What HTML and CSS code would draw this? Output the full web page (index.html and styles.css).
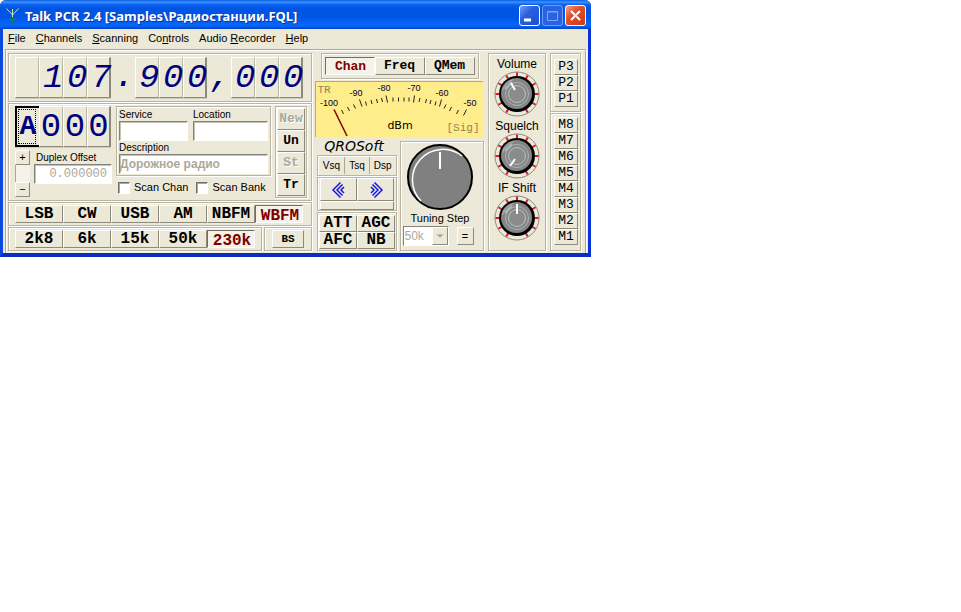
FILE: index.html
```html
<!DOCTYPE html>
<html lang="en">
<head>
<meta charset="utf-8">
<title>Talk PCR 2.4</title>
<link rel="stylesheet" href="styles.css">
</head>
<body>
<svg class="defs" aria-hidden="true">
  <symbol id="knob" viewBox="0 0 46 46">
    <circle cx="23" cy="23" r="22" fill="#ece9d8" stroke="#8c8a7c"/>
    <g stroke="#d81830" stroke-width="2">
      <path id="tick" d="M23 1.500V6"/>
      <use href="#tick" transform="rotate(30 23 23)"/>
      <use href="#tick" transform="rotate(60 23 23)"/>
      <use href="#tick" transform="rotate(90 23 23)"/>
      <use href="#tick" transform="rotate(120 23 23)"/>
      <use href="#tick" transform="rotate(150 23 23)"/>
      <use href="#tick" transform="rotate(210 23 23)"/>
      <use href="#tick" transform="rotate(240 23 23)"/>
      <use href="#tick" transform="rotate(270 23 23)"/>
      <use href="#tick" transform="rotate(300 23 23)"/>
      <use href="#tick" transform="rotate(330 23 23)"/>
    </g>
    <circle cx="23" cy="23" r="18" fill="#000"/>
    <circle cx="22.500" cy="22.500" r="15.500" fill="#858585"/>
    <path d="M8.500 20A14.500 14.500 0 0 1 20 8.500" fill="none" stroke="#a9b5b5"/>
    <path d="M11 18l7-7" stroke="#a9b4b4" stroke-width="3"/>
    <circle cx="23" cy="23" r="11.500" fill="none" stroke="#a9b5b5"/>
    <circle cx="23" cy="23" r="8.500" fill="#8b8b8b" stroke="#b8c4c4"/>
  </symbol>
</svg>
<main class="window">
  <header class="titlebar">
    <svg class="app-icon" viewBox="0 0 16 16" aria-hidden="true">
      <path d="M1.500 0.500l6 6.500 6-6.500M7.500 1v10" fill="none" stroke="#c8e6c0"/>
      <path d="M7.500 9v7M4 11.500h7" fill="none" stroke="#0a8060" stroke-width="2"/>
    </svg>
    <h1>Talk PCR 2.4 [Samples\Радиостанции.FQL]</h1>
    <button class="sys" aria-label="Minimize"><svg viewBox="0 0 19 19"><path d="M4 14h7" stroke="#fff" stroke-width="3"/></svg></button>
    <button class="sys dim" aria-label="Maximize" disabled><svg viewBox="0 0 19 19"><path d="M4.500 5.500h10v9h-10zM4 6h11" fill="none" stroke="#7ba4f2"/></svg></button>
    <button class="sys close" aria-label="Close"><svg viewBox="0 0 19 19"><path d="M5 5l9 9M14 5l-9 9" stroke="#fff" stroke-width="2"/></svg></button>
  </header>
  <nav class="menu">
    <a href="#"><u>F</u>ile</a><a href="#"><u>C</u>hannels</a><a href="#"><u>S</u>canning</a><a href="#">Co<u>n</u>trols</a><a href="#">Audio <u>R</u>ecorder</a><a href="#"><u>H</u>elp</a>
  </nav>
  <div class="panel">
    <section class="col">
      <div class="frame frequency">
        <span class="cell"></span><span class="cell">1</span><span class="cell">0</span><span class="cell edge">7</span><span class="mark">.</span><span class="cell">9</span><span class="cell">0</span><span class="cell edge">0</span><span class="mark">,</span><span class="cell">0</span><span class="cell">0</span><span class="cell edge">0</span>
      </div>
      <div class="frame channel">
        <div class="channel-left">
          <div class="channel-digits">
            <button class="cell bank">A</button><span class="cell">0</span><span class="cell">0</span><span class="cell edge">0</span>
          </div>
          <div class="duplex">
            <div class="stepper"><button class="btn">+</button><span></span><button class="btn">−</button></div>
            <div class="offset"><label for="offset">Duplex Offset</label><input id="offset" class="field" value="0.000000" disabled></div>
          </div>
        </div>
        <div class="details">
          <div class="frame detail-fields">
            <div class="entry service"><label for="service">Service</label><input id="service" class="field"></div>
            <div class="entry"><label for="location">Location</label><input id="location" class="field"></div>
            <div class="entry wide"><label for="description">Description</label><input id="description" class="field" value="Дорожное радио" disabled></div>
          </div>
          <div class="checks">
            <label><input type="checkbox">Scan Chan</label>
            <label><input type="checkbox">Scan Bank</label>
          </div>
        </div>
        <div class="frame actions">
          <button class="btn" disabled>New</button><button class="btn">Un</button><button class="btn" disabled>St</button><button class="btn">Tr</button>
        </div>
      </div>
      <div class="frame modes">
        <button class="btn">LSB</button><button class="btn">CW</button><button class="btn">USB</button><button class="btn">AM</button><button class="btn">NBFM</button><button class="btn on">WBFM</button>
      </div>
      <div class="filters">
        <div class="frame modes bandwidth">
          <button class="btn">2k8</button><button class="btn">6k</button><button class="btn">15k</button><button class="btn">50k</button><button class="btn on">230k</button>
        </div>
        <div class="frame scope"><button class="btn">BS</button></div>
      </div>
    </section>

    <section class="center">
      <div class="frame tabs"><button class="btn on">Chan</button><button class="btn">Freq</button><button class="btn">QMem</button></div>
      <svg class="meter" viewBox="0 0 168 56" role="img" aria-label="Signal meter">
        <path d="M0 0h168v56H0z" fill="#ffec8b"/>
        <path d="M.5 56V.5H168" fill="none" stroke="#b5ab78"/>
        <g class="scale">
          <text x="14" y="25">-100</text><text x="41" y="15">-90</text><text x="69" y="10">-80</text><text x="99" y="10">-70</text><text x="127" y="15">-60</text><text x="155" y="25">-50</text>
        </g>
        <path d="M44.500 18.500l2.500 7M71 14.500l1.500 7M99.500 14.500l-1 7M126.500 18.500l-2 7M151.500 28.500l-3 6M26.500 29l2 4M32.500 26l2 4M38.500 23.500l2 4M50.500 20.500l1 4M56 19l1 4M61.500 18l1 4M66.500 17l1 4M78 16.500v4M83.500 16.500v4M89 16.500v4M94 16.500v4M105 17l-1 4M111.500 18l-1 4M116 19l-1 4M121 20.500l-1 4M131 23.500l-2 4M136.500 26l-2 4M143.500 29l-2 4" stroke="#222" fill="none"/>
        <path d="M19 28.500l13 26.500" stroke="#800000" stroke-width="1.500"/>
        <text class="unit" x="85" y="48">dBm</text>
        <text class="flag" x="9" y="12">TR</text>
        <text class="flag" x="148" y="50">[Sig]</text>
      </svg>
      <div class="lower">
        <div class="switches">
          <div class="brand">QROSoft</div>
          <div class="frame squelch"><button>Vsq</button><button>Tsq</button><button>Dsp</button></div>
          <div class="frame seek">
            <button class="btn" aria-label="Seek down"><svg viewBox="0 0 16 16"><path d="M9.500 0.500L2 8l7.500 7.500M11.500 2.500L6 8l5.500 5.500M13 5l-3 3 3 3"/></svg></button>
            <button class="btn" aria-label="Seek up"><svg viewBox="0 0 16 16"><path d="M6.500 0.500L14 8l-7.500 7.500M4.500 2.500L10 8l-5.500 5.500M3 5l3 3-3 3"/></svg></button>
            <button class="btn bar" aria-label="Stop"></button>
          </div>
          <div class="frame gain"><button class="btn">ATT</button><button class="btn">AGC</button><button class="btn">AFC</button><button class="btn">NB</button></div>
        </div>
        <div class="frame tuning">
          <svg class="dial" viewBox="0 0 66 66" aria-hidden="true">
            <circle cx="33" cy="33" r="32" fill="#808080" stroke="#000" stroke-width="2"/>
            <path d="M14 57A30.500 30.500 0 0 1 55 12" fill="none" stroke="#fff" stroke-width="1.500"/>
            <path d="M33 8v17" stroke="#fff" stroke-width="2"/>
          </svg>
          <label for="step">Tuning Step</label>
          <div class="step">
            <span class="drop"><select id="step" disabled><option>50k</option></select><svg viewBox="0 0 16 16" aria-hidden="true"><path d="M4 6h8l-4 4z" fill="#aca899"/></svg></span>
            <button class="btn">=</button>
          </div>
        </div>
      </div>
    </section>

    <section class="frame knobs">
      <span>Volume</span>
      <svg viewBox="0 0 46 46" role="img" aria-label="Volume knob"><use href="#knob"/><path d="M17 12l4 7" stroke="#fff" stroke-width="2"/></svg>
      <span>Squelch</span>
      <svg viewBox="0 0 46 46" role="img" aria-label="Squelch knob"><use href="#knob"/><path d="M16 33l5-7" stroke="#fff" stroke-width="2"/></svg>
      <span>IF Shift</span>
      <svg viewBox="0 0 46 46" role="img" aria-label="IF shift knob"><use href="#knob"/><path d="M23 9v10" stroke="#fff" stroke-width="2"/></svg>
    </section>

    <section class="col">
      <div class="frame presets"><button class="btn">P3</button><button class="btn">P2</button><button class="btn">P1</button></div>
      <div class="frame presets memories"><button class="btn">M8</button><button class="btn">M7</button><button class="btn">M6</button><button class="btn">M5</button><button class="btn">M4</button><button class="btn">M3</button><button class="btn">M2</button><button class="btn">M1</button></div>
    </section>
  </div>
</main>
</body>
</html>
```
FILE: styles.css
```css
* { box-sizing: border-box; }

:root {
  --face: #ece9d8;
  --shade: #aca899;
  --dark: #716f64;
  --navy: #000080;
  --maroon: #800000;
  --sans: "Liberation Sans", Arial, sans-serif;
  --mono: "Liberation Mono", "Courier New", monospace;
}

body { margin: 0; background: #fff; font: 11px/13px var(--sans); color: #000; }
button, input, select { margin: 0; padding: 0; font: inherit; color: inherit; border-radius: 0; }
svg { display: block; }
.defs { position: absolute; width: 0; height: 0; }

.window {
  width: fit-content;
  background: var(--face);
  border: solid #0831d9;
  border-width: 0 3px 4px;
  border-color: #0c49e0 #0831d9 #0a2ec0 #0c49e0;
  border-radius: 6px 6px 0 0;
}

/* Title bar */
.titlebar {
  display: flex;
  align-items: center;
  gap: 2px;
  height: 29px;
  margin: 0 -3px;
  padding: 2px 5px 0 5px;
  border-radius: 6px 6px 0 0;
  background: linear-gradient(#0a5be0 0, #3a92ff 7%, #0a62f0 16%, #0054e3 30%, #0056e8 60%, #0566fb 85%, #0560f0 92%, #0040c0 100%);
}
.titlebar h1 {
  flex: 1;
  margin: 0 0 0 2px;
  font: bold 13px/16px "Noto Sans", sans-serif;
  color: #fff;
  text-shadow: 1px 1px 0 #0a3490;
  white-space: nowrap;
}
.app-icon { width: 16px; height: 16px; }
.sys {
  width: 21px;
  height: 21px;
  border: 1px solid #fff;
  border-radius: 3px;
  background: linear-gradient(135deg, #6f9bf5, #2a60e0 40%, #1c4fd0);
}
.sys.dim { border-color: #6f9cf0; background: #2a62e2; }
.sys.close { background: linear-gradient(135deg, #f0a088, #e0502c 40%, #c83c14); }

/* Menu */
.menu { display: flex; gap: 10px; height: 20px; padding: 3px 5px; }
.menu a { color: #000; text-decoration: none; }

/* Shared parts */
.panel {
  display: flex;
  gap: 4px;
  margin: 0 2px;
  padding: 3px 4px 2px 2px;
  border: 1px solid var(--shade);
  border-bottom: 0;
  box-shadow: inset 1px 1px 0 #fff, 1px 0 0 #fff;
}
.col { display: flex; flex-direction: column; gap: 1px; }
.frame { border: 1px solid #b9b5a5; box-shadow: inset 1px 1px 0 #fff, 1px 1px 0 #fff; }
.btn {
  display: grid;
  place-items: center;
  border: 1px solid;
  border-color: #fff #8d8a7c #8d8a7c #fff;
  background: var(--face);
  white-space: nowrap;
}
.btn:disabled { color: var(--shade); text-shadow: 1px 1px 0 #fff; }
.btn.on {
  padding: 2px 0 0 2px;
  border-color: var(--dark) #fff #fff var(--dark);
  background: #f4f2e9;
  color: var(--maroon);
}
.field {
  width: 100%;
  border: 1px solid;
  border-color: #85827a #fff #fff #85827a;
  background: #fff;
  box-shadow: inset 1px 1px 0 #c6c3b4;
}
.field:disabled { color: var(--shade); }

/* Frequency readout */
.cell, .mark {
  width: 24px;
  height: 41px;
  color: var(--navy);
  font: 34px/40px var(--mono);
  text-align: center;
}
.cell {
  border: 1px solid;
  border-color: #fff #b9b5a5 #8d8a7c #fff;
  background: var(--face);
  box-shadow: 0 1px 0 #d0cdbd;
}
.cell.edge { border-right: 2px solid #8d8a7c; }
.frequency { display: flex; padding: 3px 8px 3px 6px; }
.frequency .cell, .frequency .mark { padding-left: 3px; font-style: italic; }

/* Channel block */
.channel { display: flex; gap: 4px; padding: 2px 4px 2px 6px; }
.channel-left { width: 97px; }
.channel-digits { display: flex; }
.channel-digits .bank {
  border: 2px solid #000;
  border-right: 0;
  outline: 1px dotted #000;
  outline-offset: -4px;
  font-size: 28px;
  font-weight: bold;
  line-height: 36px;
}
.duplex { display: flex; gap: 4px; padding-top: 3px; }
.stepper { display: flex; flex-direction: column; width: 15px; }
.stepper .btn { height: 15px; line-height: 11px; }
.stepper span { height: 17px; background: #f4f2e9; border-left: 1px solid var(--shade); }
.offset { flex: 1; padding-top: 1px; }
.offset label { display: block; padding: 0 2px; font-size: 10px; }
.offset input { height: 20px; padding-right: 4px; font: 12px/16px var(--mono); text-align: right; }
.details { width: 155px; }
.detail-fields { display: grid; grid-template-columns: 69px 75px; gap: 0 5px; padding: 1px 2px; }
.entry label { display: block; font-size: 10px; line-height: 13px; }
.entry input { height: 20px; }
.entry.wide { grid-column: span 2; }
.entry.wide input { font: bold 12px/16px var(--sans); }
.checks { display: flex; gap: 8px; padding: 5px 2px 4px; }
.checks label { display: flex; align-items: center; gap: 4px; white-space: nowrap; }
.checks input {
  appearance: none;
  width: 12px;
  height: 12px;
  border: 1px solid;
  border-color: var(--dark) #fff #fff var(--dark);
  background: #fff;
  box-shadow: inset 1px 1px 0 #aca899;
}
.actions { width: 32px; padding: 1px; }
.actions .btn { width: 100%; height: 22px; font: bold 13px/16px var(--mono); }

/* Mode and bandwidth rows */
.modes { display: flex; padding: 2px 8px 2px 6px; }
.modes .btn { width: 48px; height: 18px; font: bold 16px/16px var(--mono); }
.filters { display: flex; gap: 2px; }
.bandwidth { padding: 2px 6px; }
.scope { padding: 2px 7px; }
.scope .btn { width: 32px; height: 18px; font: bold 11px/14px var(--mono); }

/* Tabs, meter, switches and tuning */
.center { display: flex; flex-direction: column; gap: 2px; margin-left: -1px; }
.tabs { display: flex; align-self: center; padding: 3px; }
.tabs .btn { width: 50px; height: 18px; font: bold 13px/14px var(--mono); }
.meter { width: 168px; height: 56px; }
.meter text { text-anchor: middle; }
.scale { font: 9px var(--sans); fill: #000030; }
.unit { font: 11px "DejaVu Sans", sans-serif; }
.flag { font: 11px var(--mono); fill: #8f8558; }
.lower { display: flex; gap: 3px; padding-left: 2px; }
.switches { display: flex; flex-direction: column; gap: 1px; width: 80px; }
.brand { height: 15px; padding-right: 6px; font: italic 14px/15px "DejaVu Sans", sans-serif; text-align: center; }
.squelch { display: flex; height: 21px; padding: 1px; }
.squelch button { flex: 1; border: 0; border-right: 1px solid var(--shade); background: none; font-size: 10px; }
.squelch button:last-child { border-right: 0; }
.seek { display: grid; grid-template-columns: 1fr 1fr; height: 34px; padding: 0 2px; }
.seek .btn { height: 23px; }
.seek .bar { grid-column: span 2; height: 9px; }
.seek svg { width: 16px; height: 16px; fill: none; stroke: #1818e0; stroke-width: 1.5; }
.gain { display: grid; grid-template-columns: 1fr 1fr; padding: 2px 1px 1px; }
.gain .btn { height: 17px; font: bold 16px/15px var(--mono); }
.tuning { display: flex; flex-direction: column; align-items: center; width: 84px; margin-top: 2px; padding: 2px 4px 0 0; }
.dial { width: 66px; height: 66px; }
.tuning label { padding: 2px 0 1px; }
.step { display: flex; align-items: center; gap: 8px; padding-right: 4px; }
.step .btn { width: 17px; height: 18px; }
.drop {
  display: grid;
  grid-template-columns: 28px 16px;
  height: 20px;
  border: 1px solid;
  border-color: #85827a #fff #fff #85827a;
  background: #fff;
}
.drop select { appearance: none; border: 0; background: none; padding-left: 1px; font-size: 12px; color: var(--shade); opacity: 1; }
.drop svg { width: 16px; height: 18px; background: var(--face); border: 1px solid; border-color: #fff #8d8a7c #8d8a7c #fff; }

/* Knobs */
.knobs { display: flex; flex-direction: column; align-items: center; width: 58px; padding-top: 3px; }
.knobs span { font-size: 12px; line-height: 14px; white-space: nowrap; }
.knobs svg { width: 46px; height: 46px; margin-bottom: 2px; }

/* Presets */
.presets { padding: 5px 2px 4px 3px; }
.presets .btn { width: 24px; height: 16px; font: 13px/14px var(--mono); }
.memories { padding: 3px 2px 5px 3px; }
```
